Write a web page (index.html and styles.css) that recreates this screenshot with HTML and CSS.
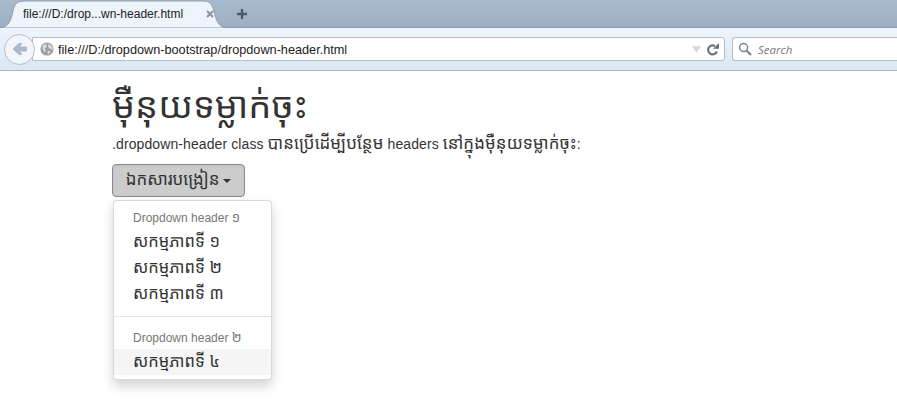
FILE: index.html
```html
<!DOCTYPE html>
<html lang="km">
<head>
<meta charset="utf-8">
<title>Dropdown header</title>
<link rel="stylesheet" href="styles.css">
</head>
<body>
<header class="browser">
  <div class="tabstrip">
    <div class="tab">
      <svg class="tab-shape" width="227" height="28" viewBox="0 0 227 28"><path d="M0 28C9 27 11 20 13 11C14.500 4 17 1 24 1H203C210 1 212 4 214 11C216 20 218 27 227 28Z" fill="#eef4fb" stroke="#8f9cab"/></svg>
      <span class="tab-title">file:///D:/drop...wn-header.html</span>
      <svg class="tab-close" width="8" height="8" viewBox="0 0 8 8"><path d="M1 1L7 7M7 1L1 7" stroke="#8d969e" stroke-width="2.200"/></svg>
    </div>
    <svg class="plus" width="12" height="12" viewBox="0 0 12 12"><path d="M6 1V11M1 6H11" stroke="#4d5b68" stroke-width="2.400"/></svg>
  </div>
  <div class="toolbar">
    <div class="back"><svg width="15" height="14" viewBox="0 0 15 14"><path d="M1 7L7 1.500H9.500L7.500 5H14.500V9H7.500L9.500 12.500H7Z" fill="#a9bacb" stroke="#a9bacb" stroke-linejoin="round"/></svg></div>
    <div class="urlbar">
      <svg class="globe" width="14" height="14" viewBox="0 0 16 16"><circle cx="8" cy="8" r="7.500" fill="#9b9fa3"/><path d="M3 3.500L7 2.500L8 5L5.500 7.500L6.500 10.500L5 12L3 8ZM10 2L14 5L14.500 9L11.500 8L9 5.500ZM9 10L12 10.500L10 14L8.500 13Z" fill="#d9dcdf"/></svg>
      <span class="url">file:///D:/dropdown-bootstrap/dropdown-header.html</span>
      <svg class="drop" width="9" height="7" viewBox="0 0 11 8"><path d="M0 0H11L5.500 8Z" fill="#d3d8dd"/></svg>
      <svg class="reload" width="13" height="13" viewBox="0 0 13 13"><path d="M10.800 8.500A4.500 4.500 0 1 1 9 3" fill="none" stroke="#69737c" stroke-width="2.200"/><path d="M7 5.800H13V0Z" fill="#69737c"/></svg>
    </div>
    <div class="searchbar">
      <svg width="14" height="14" viewBox="0 0 15 15"><circle cx="6" cy="6" r="4.300" fill="none" stroke="#7b858e" stroke-width="1.600"/><path d="M9.300 9.300L14 14" stroke="#7b858e" stroke-width="2.400"/></svg>
      <span class="search-text">Search</span>
    </div>
  </div>
</header>
<main class="page">
  <h1 class="title">ម៉ឺនុយទម្លាក់ចុះ</h1>
  <p class="lead">.dropdown-header class <span class="km">បានប្រើដើម្បីបន្ថែម</span> headers <span class="km">នៅក្នុងម៉ឺនុយទម្លាក់ចុះ</span>:</p>
  <button class="btn"><span class="km">ឯកសារបង្រៀន</span> <span class="caret"></span></button>
  <ul class="menu">
    <li class="menu-header">Dropdown header <span class="km-small">១</span></li>
    <li class="menu-item">សកម្មភាពទី ១</li>
    <li class="menu-item">សកម្មភាពទី ២</li>
    <li class="menu-item">សកម្មភាពទី ៣</li>
    <li class="divider"></li>
    <li class="menu-header">Dropdown header <span class="km-small">២</span></li>
    <li class="menu-item active">សកម្មភាពទី ៤</li>
  </ul>
</main>
</body>
</html>
```
FILE: styles.css
```css
* { box-sizing: border-box; }
html, body { margin: 0; height: 100%; overflow: hidden; background: #fff; }
body { font-family: "Liberation Sans", "Noto Sans Khmer", "Khmer OS", sans-serif; color: #333; }

.browser { height: 71px; border-bottom: 1px solid #a9b8c6; }
.tabstrip {
  height: 28px;
  display: flex;
  align-items: center;
  background: linear-gradient(#a9bccf, #9cafc0);
  border-bottom: 1px solid #8f9cab;
}
.tab { position: relative; width: 227px; height: 28px; flex: none; display: flex; align-items: center; padding: 0 0 0 23px; }
.tab-shape { position: absolute; left: 0; top: 0; }
.tab-title { position: relative; font-size: 12px; color: #222; width: 183px; white-space: nowrap; }
.tab-close { position: relative; }
.plus { margin-left: 9px; margin-top: 1px; }

.toolbar {
  height: 42px;
  display: flex;
  align-items: center;
  padding: 0 0 0 4px;
  background: linear-gradient(#eef4fb, #dbe7f4);
}
.back {
  width: 31px; height: 31px; flex: none;
  border-radius: 50%;
  border: 1px solid #b3bfcc;
  background: #f2f6fb;
  display: flex; align-items: center; justify-content: center;
  z-index: 1;
}
.urlbar {
  width: 693px; height: 24px; margin-left: -3px; flex: none;
  display: flex; align-items: center;
  background: #fff;
  border: 1px solid #b4bfca;
  border-radius: 0 3px 3px 0;
  padding-left: 7px;
}
.globe { flex: none; }
.url { font-size: 12.700px; line-height: 16px; padding-top: 1px; color: #222; margin-left: 4px; flex: 1; white-space: nowrap; }
.drop { margin-right: 5px; }
.reload { margin-right: 5px; }
.searchbar {
  flex: 1; height: 24px; margin-left: 7px;
  display: flex; align-items: center; gap: 6px;
  background: #fff;
  border: 1px solid #b4bfca;
  border-right: 0;
  border-radius: 3px 0 0 3px;
  padding-left: 5px;
}
.search-text { font-size: 11.500px; font-style: italic; color: #777; font-family: "Open Sans", sans-serif; }

.page { padding: 15px 0 0 112px; position: relative; }
.title { margin: 0; font-size: 36.400px; font-weight: 400; line-height: 40px; height: 48px; color: #333; }
.lead { margin: 0 0 10px; font-size: 14px; line-height: 20px; height: 20px; white-space: nowrap; letter-spacing: .1px; }
.km { font-size: 16.900px; line-height: 1; }
.km-small { font-size: 13px; }
.btn {
  display: block;
  width: 133px; height: 33px;
  padding: 0;
  font: inherit; font-size: 14px; color: #333;
  background: #ccc;
  border: 1px solid #8c8c8c;
  border-radius: 4px;
  box-shadow: inset 0 1px 3px rgba(0,0,0,.06);
}
.caret {
  display: inline-block;
  vertical-align: middle;
  border-top: 4px solid #333;
  border-left: 4px solid transparent;
  border-right: 4px solid transparent;
}
.menu {
  list-style: none;
  width: 159px;
  margin: 3px 0 0 1px;
  padding: 5px 0 4px;
  background: #fff;
  border: 1px solid rgba(0,0,0,.15);
  border-radius: 4px;
  box-shadow: 0 6px 12px rgba(0,0,0,.175);
  font-size: 16.500px;
}
.menu-header { padding: 3px 19px; font-size: 12px; line-height: 17px; color: #777; height: 23px; white-space: nowrap; }
.menu-item { padding: 0 19px; height: 26px; line-height: 24px; color: #333; white-space: nowrap; }
.menu-item.active { background: #f5f5f5; }
.divider { height: 1px; margin: 9px 0 9px; background: #e5e5e5; }
```
